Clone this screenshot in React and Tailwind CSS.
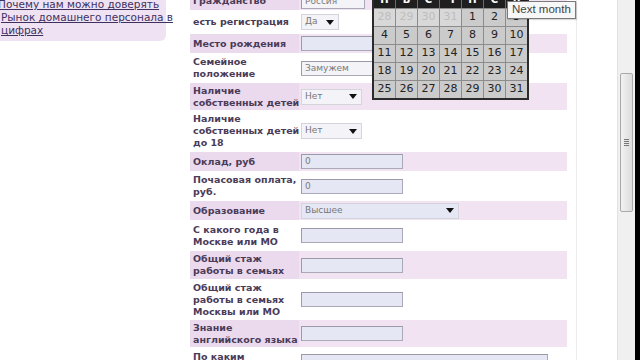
const rows = [
  { label: ['Гражданство'], h: 'h-[18px]', pink: true, field: { type: 'input', w: 'w-[64px]', value: 'Россия', light: true } },
  { label: ['есть регистрация'], h: 'h-[20px]', field: { type: 'select', w: 'w-[38px]', value: 'Да' } },
  { label: ['Место рождения'], h: 'h-[19px]', pink: true, field: { type: 'input', w: 'w-[102px]' } },
  { label: ['Семейное', 'положение'], h: 'h-[26px]', field: { type: 'input', w: 'w-[102px]', value: 'Замужем', light: true } },
  { label: ['Наличие', 'собственных детей'], h: 'h-[27px]', pink: true, field: { type: 'select', w: 'w-[61px]', value: 'Нет' } },
  { label: ['Наличие', 'собственных детей', 'до 18'], h: 'h-[38px]', field: { type: 'select', w: 'w-[61px]', value: 'Нет' } },
  { label: ['Оклад, руб'], h: 'h-[19px]', pink: true, field: { type: 'input', w: 'w-[102px]', value: '0' } },
  { label: ['Почасовая оплата,', 'руб.'], h: 'h-[26px]', field: { type: 'input', w: 'w-[102px]', value: '0' } },
  { label: ['Образование'], h: 'h-[19px]', pink: true, field: { type: 'select', w: 'w-[158px]', value: 'Высшее', blue: true } },
  { label: ['С какого года в', 'Москве или МО'], h: 'h-[27px]', field: { type: 'input', w: 'w-[102px]' } },
  { label: ['Общий стаж', 'работы в семьях'], h: 'h-[28px]', pink: true, field: { type: 'input', w: 'w-[102px]' } },
  { label: ['Общий стаж', 'работы в семьях', 'Москвы или МО'], h: 'h-[37px]', field: { type: 'input', w: 'w-[102px]' } },
  { label: ['Знание', 'английского языка'], h: 'h-[27px]', pink: true, field: { type: 'input', w: 'w-[102px]' } },
  { label: ['По каким', 'направлениям'], h: 'h-[40px]', top: true, field: { type: 'input', w: 'w-[247px]' } },
];

const weeks = [
  [28, 29, 30, 31, 1, 2, 3],
  [4, 5, 6, 7, 8, 9, 10],
  [11, 12, 13, 14, 15, 16, 17],
  [18, 19, 20, 21, 22, 23, 24],
  [25, 26, 27, 28, 29, 30, 31],
];

const Arrow = () => (
  <svg className="w-[8px] h-[5px]" viewBox="0 0 8 5">
    <path d="M0 0h8L4 5z" fill="#111" />
  </svg>
);

const Field = ({ f }) => {
  if (f.type === 'select') {
    return (
      <div
        className={`${f.w} h-[16px] flex items-center justify-between pl-[3px] pr-[4px] border border-[#d4d4dc] ${
          f.blue ? 'bg-[#e6e7f4]' : 'bg-[#f4f4f8]'
        }`}
      >
        <span className="text-[9px] text-[#777]">{f.value}</span>
        <Arrow />
      </div>
    );
  }
  return (
    <div
      className={`${f.w} h-[15px] flex items-center px-[3px] border border-[#a9a9b8] border-l-[#9a9aa8] border-t-[#9a9aa8] ${
        f.light ? 'bg-[#f3f3f8]' : 'bg-[#e5e7f4]'
      }`}
    >
      <span className="text-[9px] text-[#7a7a7a] leading-none">{f.value}</span>
    </div>
  );
};

export default function App() {
  return (
    <div className="relative w-[640px] h-[360px] overflow-hidden bg-white flex font-['DejaVu_Sans',sans-serif]">
      <div className="w-[190px] shrink-0">
        <div className="w-[168px] h-[43px] bg-[#efe2f3] rounded-br-[6px] -ml-[2px] -mt-[2px] text-[10.5px] leading-[13px] text-[#3e3160]">
          <a className="block underline whitespace-nowrap">Почему нам можно доверять</a>
          <a className="block underline ml-[3px] whitespace-nowrap">Рынок домашнего персонала в</a>
          <a className="block underline ml-[3px]">цифрах</a>
        </div>
      </div>

      <div className="w-[377px] shrink-0 -mt-[8px] flex flex-col gap-[2px]">
        {rows.map((r, i) => (
          <div key={i} className={`${r.h} flex shrink-0`}>
            <div
              className={`w-[109px] shrink-0 flex flex-col pl-[3px] text-[9.5px] leading-[12px] font-bold text-[#4a3b58] whitespace-nowrap ${
                r.top ? 'justify-start pt-[2px]' : 'justify-center'
              } ${r.pink ? 'bg-[#ebdaed]' : ''}`}
            >
              {r.label.map((l) => (
                <span key={l}>{l}</span>
              ))}
            </div>
            <div
              className={`flex-1 flex pl-[2px] ${r.top ? 'items-start pt-[5px]' : 'items-center'} ${
                r.pink ? 'bg-[#f1e3f2]' : ''
              }`}
            >
              <Field f={r.field} />
            </div>
          </div>
        ))}
      </div>

      <div className="flex-1 border-r border-[#ececec] mr-[40px]" />

      <div className="w-[18px] shrink-0 bg-[#f0f0f0] border-l border-[#e2e2e2] flex justify-center pt-[73px]">
        <div className="w-[13px] h-[139px] rounded-[2px] border border-[#a9a9a9] bg-gradient-to-r from-[#f2f2f2] to-[#dcdcdc] flex items-center justify-center">
          <div className="flex flex-col gap-[1px]">
            <div className="w-[5px] h-[1px] bg-[#777]" />
            <div className="w-[5px] h-[1px] bg-[#777]" />
            <div className="w-[5px] h-[1px] bg-[#777]" />
            <div className="w-[5px] h-[1px] bg-[#777]" />
          </div>
        </div>
      </div>
      <div className="w-[5px] shrink-0 bg-black" />

      <div className="absolute left-[372px] top-[-10px] w-[157px] bg-[#2b2b2b] border-2 border-[#2b2b2b]">
        <div className="grid grid-cols-7 gap-[1px] h-[16px] bg-[#6a6a6a]">
          {['П', 'В', 'С', 'Ч', 'П', 'С', 'В'].map((d, i) => (
            <div key={i} className="bg-[#1f1f1f] text-white text-[10px] font-bold flex items-end justify-center pb-[1px]">
              {d}
            </div>
          ))}
        </div>
        <div className="grid grid-cols-7 gap-[1px] bg-[#8c8c8c] pt-[1px]">
          {weeks.flat().map((d, i) => {
            const other = i < 4;
            return (
              <div
                key={i}
                className={`h-[17px] flex items-center justify-center text-[11px] ${
                  other ? 'bg-[#d8d8d8] text-[#bdbdbd]' : 'bg-[#cbcbcb] text-[#222]'
                }`}
              >
                {d}
              </div>
            );
          })}
        </div>
      </div>

      <div className="absolute left-[507px] top-[1px] h-[18px] px-[4px] flex items-center bg-[#f7f7f7] border border-[#7a7a7a] text-[11.5px] text-[#444] font-['Liberation_Sans',sans-serif] shadow-[1px_1px_1px_rgba(0,0,0,0.15)]">
        Next month
      </div>
    </div>
  );
}
